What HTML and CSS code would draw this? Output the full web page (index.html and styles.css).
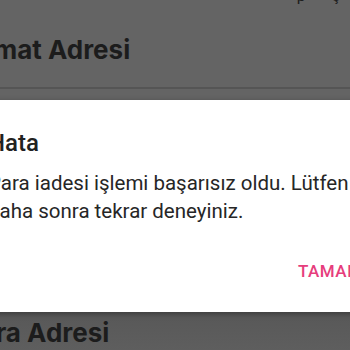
FILE: index.html
```html
<!DOCTYPE html>
<html lang="tr">
<head>
<meta charset="utf-8">
<link rel="stylesheet" href="styles.css">
</head>
<body>
<div class="screen">
  <div class="top-hint"><span class="hint-a">p</span><span class="hint-b">ş</span></div>
  <div class="section-title title-top">Teslimat Adresi</div>
  <div class="divider"></div>
  <div class="dialog">
    <h2 class="dialog-title">Hata</h2>
    <p class="dialog-msg">Para iadesi işlemi başarısız oldu. Lütfen daha sonra tekrar deneyiniz.</p>
    <div class="dialog-actions"><button class="btn-ok">TAMAM</button></div>
  </div>
  <div class="section-title title-bottom">Fatura Adresi</div>
</div>
</body>
</html>
```
FILE: styles.css
```css
html, body {
  margin: 0;
  padding: 0;
  width: 350px;
  height: 350px;
  overflow: hidden;
  background: #646464;
}
.screen {
  width: 350px;
  height: 350px;
  overflow: hidden;
  display: flex;
  flex-direction: column;
  font-family: Roboto, "Noto Sans", sans-serif;
}
.top-hint {
  height: 8px;
  margin-top: -14px;
  display: flex;
  justify-content: flex-end;
  gap: 26px;
  padding-right: 10px;
  font-size: 16px;
  line-height: 20px;
  color: #1e1e1e;
}
.section-title {
  font-family: Inter, "Open Sans", sans-serif;
  font-weight: 700;
  font-size: 26px;
  color: #1c1c1c;
  white-space: nowrap;
  line-height: 30px;
}
.title-top {
  margin-top: 41px;
  margin-left: -66px;
}
.divider {
  margin-top: 22px;
  height: 2px;
  background: #555555;
}
.dialog {
  margin-top: 11px;
  margin-left: -40px;
  width: 440px;
  height: 212px;
  flex-shrink: 0;
  box-sizing: border-box;
  background: #ffffff;
  padding: 28px 0 0 28px;
  box-shadow: 0 2px 6px rgba(0,0,0,0.35);
  position: relative;
  z-index: 1;
}
.dialog-title {
  margin: 0;
  font-weight: 500;
  font-size: 24px;
  line-height: 30px;
  color: #212121;
}
.dialog-msg {
  margin: 11px 0 0;
  width: 385px;
  font-size: 20.5px;
  line-height: 28px;
  color: #262626;
}
.dialog-actions {
  margin-top: 36px;
  display: flex;
  padding-left: 310px;
}
.btn-ok {
  border: none;
  background: none;
  padding: 0;
  font-family: Roboto, sans-serif;
  font-weight: 500;
  font-size: 17px;
  line-height: 20px;
  letter-spacing: 0.5px;
  color: #e63d7c;
}
.title-bottom {
  flex: 1;
  margin-left: -60px;
  background: linear-gradient(#585858, #5e5e5e);
  padding-top: 6px;
}
```
